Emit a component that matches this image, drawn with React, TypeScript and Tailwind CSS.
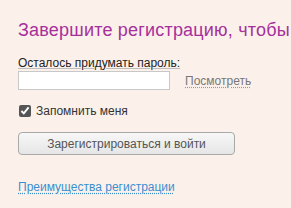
import React from 'react';

const App: React.FC = () => {
  return (
    <div
      className="w-[291px] h-[208px] overflow-hidden bg-[#fcf1ea] pl-[18px] pt-[19px]"
      style={{ fontFamily: '"Liberation Sans", Arial, sans-serif' }}
    >
      <h1 className="text-[18px] leading-[22px] tracking-[0.2px] text-[#a5309c] whitespace-nowrap">
        Завершите регистрацию, чтобы
      </h1>

      <div className="mt-[15px] text-[12px] leading-[14px] text-[#222] underline decoration-[#bbb]">
        Осталось придумать пароль:
      </div>

      <div className="mt-[1px] flex items-center">
        <input
          type="password"
          className="w-[152px] h-[19px] bg-white border border-[#c8c8c8] outline-none"
        />
        <span className="ml-[15px] text-[12px] text-[#777] underline decoration-dotted decoration-[#999] underline-offset-2">
          Посмотреть
        </span>
      </div>

      <label className="mt-[12px] flex items-center">
        <input type="checkbox" defaultChecked className="w-[12px] h-[12px] m-0 ml-[1px] accent-[#555]" />
        <span className="ml-[5px] text-[12px] text-[#333]">Запомнить меня</span>
      </label>

      <button className="mt-[12px] w-[217px] h-[23px] rounded-[4px] border border-[#a9a9a9] bg-gradient-to-b from-[#f7f7f7] to-[#e6e6e6] text-[12px] text-[#555]">
        Зарегистрироваться и войти
      </button>

      <div className="mt-[19px]">
        <span className="text-[12px] text-[#3a8fd0] underline decoration-dotted decoration-[#3a8fd0] underline-offset-2">
          Преимущества регистрации
        </span>
      </div>
    </div>
  );
};

export default App;
